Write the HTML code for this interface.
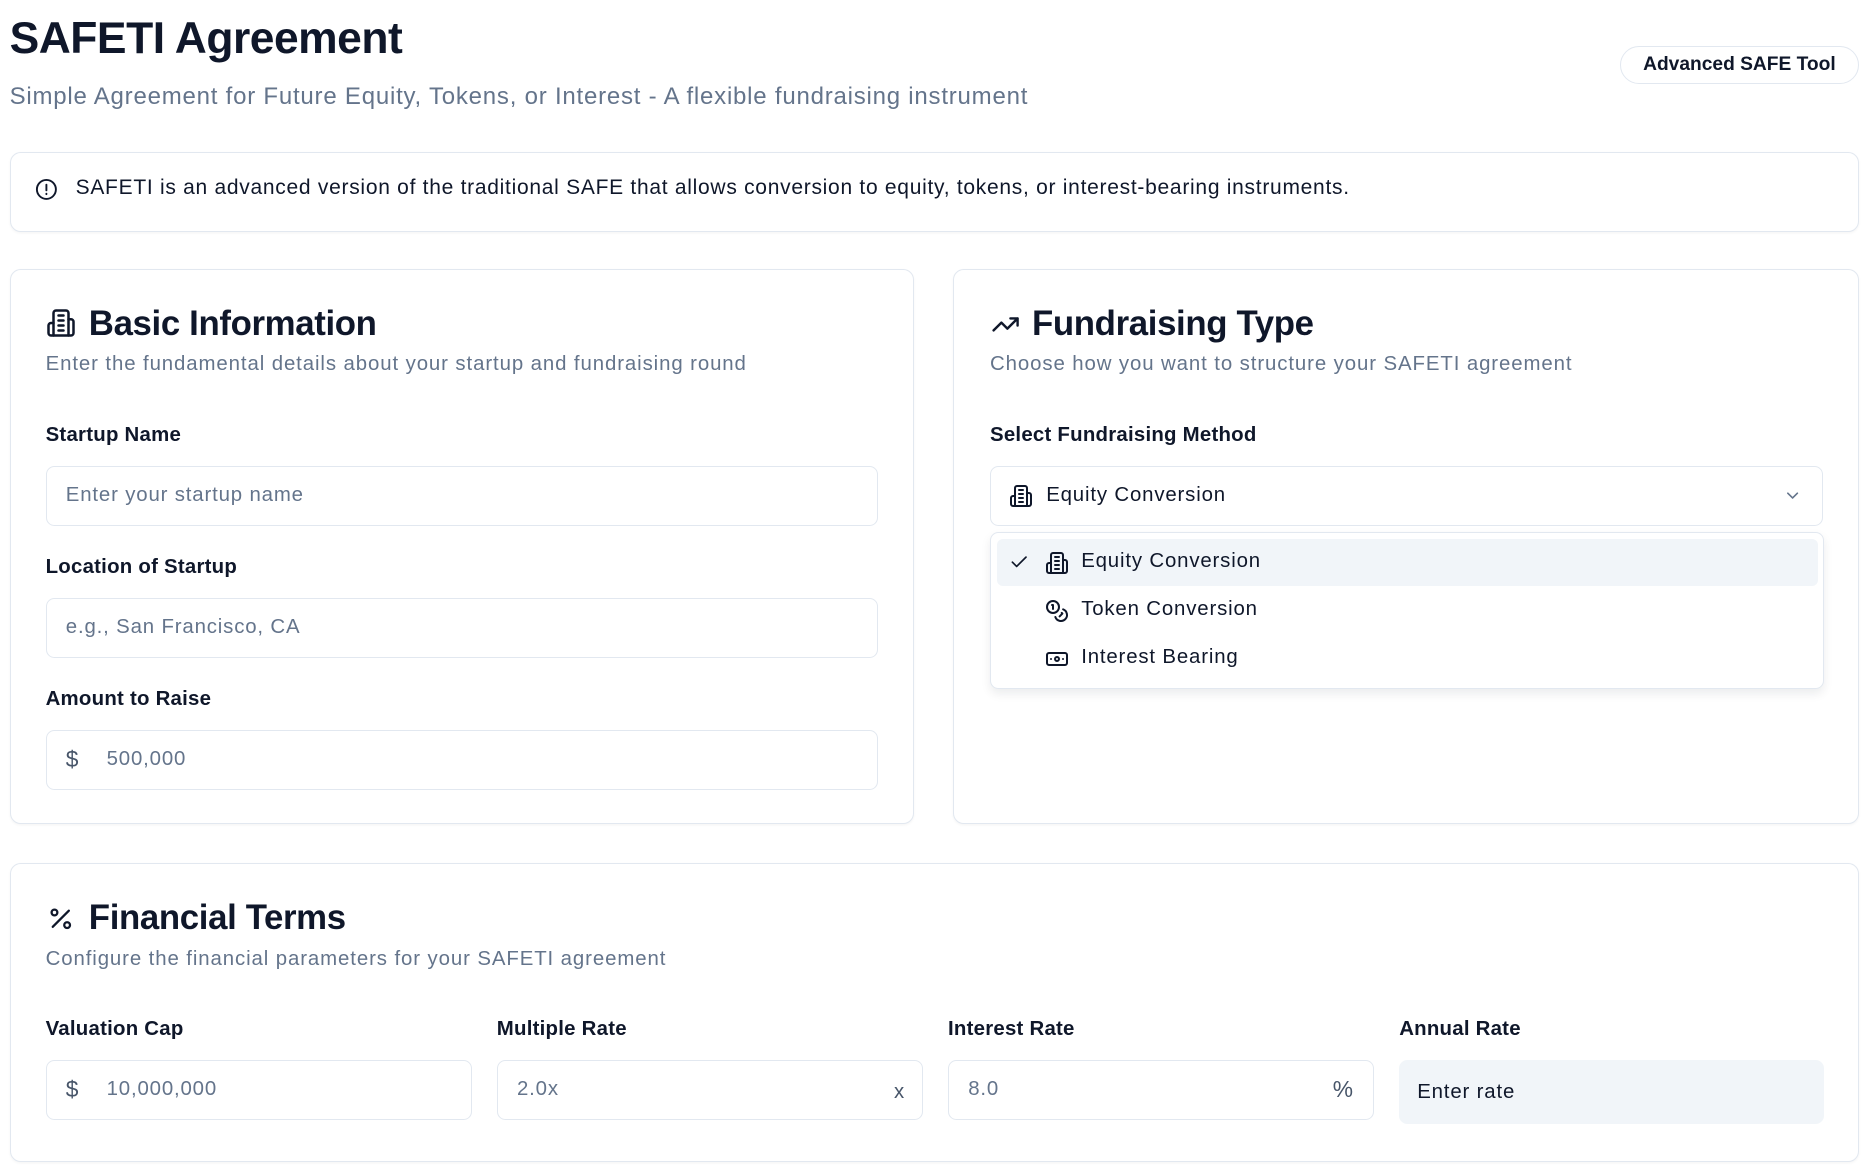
<!DOCTYPE html>
<html><head><meta charset="utf-8"><style>
*{box-sizing:border-box;margin:0;padding:0}
html,body{width:1876px;height:1167px;overflow:hidden;background:#fff}
#w{zoom:1.2;position:relative;width:1563px;height:973px;font-family:"Liberation Sans",Arial,sans-serif;color:#0f172a}
.a{position:absolute}
.card{position:absolute;border:1px solid #e2e8f0;border-radius:9px;background:#fff;box-shadow:0 1px 2px rgba(0,0,0,.04)}
.h{position:absolute;font-size:29px;font-weight:700;letter-spacing:-.3px;white-space:nowrap}
.d{position:absolute;font-size:17px;color:#64748b;white-space:nowrap;letter-spacing:.75px}
.l{position:absolute;font-size:17px;font-weight:600;color:#0f172a;white-space:nowrap;letter-spacing:.2px}
.in{position:absolute;height:50px;border:1px solid #e2e8f0;border-radius:7px;font-size:17px;color:#64748b;padding-left:16px;line-height:48px;white-space:nowrap;letter-spacing:.7px}
.t{letter-spacing:.7px}
svg{position:absolute;fill:none;stroke:#0f172a;stroke-width:2;stroke-linecap:round;stroke-linejoin:round}
</style></head><body><div id="w">
<div class="a" style="left:8px;top:12px;font-size:37px;font-weight:700;letter-spacing:-.4px">SAFETI Agreement</div>
<div class="a" style="left:8px;top:69px;font-size:20px;color:#64748b;letter-spacing:.65px">Simple Agreement for Future Equity, Tokens, or Interest - A flexible fundraising instrument</div>
<div class="a" style="left:1350px;top:38px;width:199px;height:32px;border:1px solid #e2e8f0;border-radius:16px;font-size:16px;font-weight:700;text-align:center;line-height:30px">Advanced SAFE Tool</div>

<div class="card" style="left:8px;top:127px;width:1541px;height:66px"></div>
<svg style="left:29px;top:148px" width="19" height="19" viewBox="0 0 24 24"><circle cx="12" cy="12" r="10"/><path d="M12 7v6M12 16.5v.5"/></svg>
<div class="a t" style="left:63px;top:147px;font-size:17.5px;letter-spacing:.6px">SAFETI is an advanced version of the traditional SAFE that allows conversion to equity, tokens, or interest-bearing instruments.</div>

<div class="card" style="left:8px;top:224px;width:754px;height:463px"></div>
<svg style="left:38px;top:257px" width="25" height="25" viewBox="0 0 24 24"><path d="M6 22V4a2 2 0 0 1 2-2h8a2 2 0 0 1 2 2v18z"/><path d="M6 12H4a2 2 0 0 0-2 2v6a2 2 0 0 0 2 2h2M18 9h2a2 2 0 0 1 2 2v9a2 2 0 0 1-2 2h-2M10 6h4M10 10h4M10 14h4M10 18h4"/></svg>
<div class="h" style="left:74px;top:253px">Basic Information</div>
<div class="d" style="left:38px;top:294px">Enter the fundamental details about your startup and fundraising round</div>
<div class="l" style="left:38px;top:353px">Startup Name</div>
<div class="in" style="left:38px;top:388px;width:694px">Enter your startup name</div>
<div class="l" style="left:38px;top:463px">Location of Startup</div>
<div class="in" style="left:38px;top:498px;width:694px">e.g., San Francisco, CA</div>
<div class="l" style="left:38px;top:573px">Amount to Raise</div>
<div class="in" style="left:38px;top:608px;width:694px"><span style="color:#475569;font-size:19px">$</span><span style="position:absolute;left:50px">500,000</span></div>

<div class="card" style="left:794px;top:224px;width:755px;height:463px"></div>
<svg style="left:825px;top:258px" width="26" height="24" viewBox="0 0 24 24"><path d="M22 7l-8.5 8.5-5-5L2 17M16 7h6v6"/></svg>
<div class="h" style="left:860px;top:253px">Fundraising Type</div>
<div class="d" style="left:825px;top:294px">Choose how you want to structure your SAFETI agreement</div>
<div class="l" style="left:825px;top:353px">Select Fundraising Method</div>
<div class="in" style="left:825px;top:388px;width:694px;color:#0f172a;padding-left:46px">Equity Conversion</div>
<svg style="left:841px;top:403px" width="20" height="20" viewBox="0 0 24 24"><path d="M6 22V4a2 2 0 0 1 2-2h8a2 2 0 0 1 2 2v18z"/><path d="M6 12H4a2 2 0 0 0-2 2v6a2 2 0 0 0 2 2h2M18 9h2a2 2 0 0 1 2 2v9a2 2 0 0 1-2 2h-2M10 6h4M10 10h4M10 14h4M10 18h4"/></svg>
<svg style="left:1486px;top:405px;stroke:#64748b" width="16" height="16" viewBox="0 0 24 24"><path d="M6 9l6 6 6-6"/></svg>
<div class="a" style="left:825px;top:443px;width:695px;height:131px;border:1px solid #e2e8f0;border-radius:7px;background:#fff;box-shadow:0 4px 8px rgba(15,23,42,.08)"></div>
<div class="a" style="left:831px;top:449px;width:684px;height:39px;border-radius:5px;background:#f1f5f9"></div>
<svg style="left:841px;top:460px" width="17" height="17" viewBox="0 0 24 24"><path d="M20 6L9 17l-5-5"/></svg>
<svg style="left:871px;top:459px" width="20" height="20" viewBox="0 0 24 24"><path d="M6 22V4a2 2 0 0 1 2-2h8a2 2 0 0 1 2 2v18z"/><path d="M6 12H4a2 2 0 0 0-2 2v6a2 2 0 0 0 2 2h2M18 9h2a2 2 0 0 1 2 2v9a2 2 0 0 1-2 2h-2M10 6h4M10 10h4M10 14h4M10 18h4"/></svg>
<div class="a t" style="left:901px;top:458px;font-size:17px">Equity Conversion</div>
<svg style="left:871px;top:499px" width="20" height="20" viewBox="0 0 24 24"><circle cx="8" cy="8" r="6"/><path d="M18.09 10.37A6 6 0 1 1 10.34 18M7 6h1v4M16.71 13.88l.7.71-2.82 2.82"/></svg>
<div class="a t" style="left:901px;top:498px;font-size:17px">Token Conversion</div>
<svg style="left:871px;top:539px" width="20" height="20" viewBox="0 0 24 24"><rect x="2" y="6" width="20" height="12" rx="2"/><circle cx="12" cy="12" r="2"/><path d="M6 12h.01M18 12h.01"/></svg>
<div class="a t" style="left:901px;top:538px;font-size:17px">Interest Bearing</div>

<div class="card" style="left:8px;top:719px;width:1541px;height:249px"></div>
<svg style="left:39px;top:754px" width="23" height="23" viewBox="0 0 24 24"><path d="M19 5L5 19"/><circle cx="6.5" cy="6.5" r="2.5"/><circle cx="17.5" cy="17.5" r="2.5"/></svg>
<div class="h" style="left:74px;top:748px">Financial Terms</div>
<div class="d" style="left:38px;top:790px">Configure the financial parameters for your SAFETI agreement</div>
<div class="l" style="left:38px;top:848px">Valuation Cap</div>
<div class="l" style="left:414px;top:848px">Multiple Rate</div>
<div class="l" style="left:790px;top:848px">Interest Rate</div>
<div class="l" style="left:1166px;top:848px">Annual Rate</div>
<div class="in" style="left:38px;top:883px;width:355px"><span style="color:#475569;font-size:19px">$</span><span style="position:absolute;left:50px">10,000,000</span></div>
<div class="in" style="left:414px;top:883px;width:355px">2.0x<span style="position:absolute;right:14px;top:3px;color:#475569">x</span></div>
<div class="in" style="left:790px;top:883px;width:355px">8.0<span style="position:absolute;right:16px;color:#475569;font-size:19px">%</span></div>
<div class="in" style="left:1166px;top:883px;width:354px;height:54px;border:none;background:#f1f5f9;color:#0f172a;line-height:54px;padding-left:15px">Enter rate</div>
</div></body></html>
